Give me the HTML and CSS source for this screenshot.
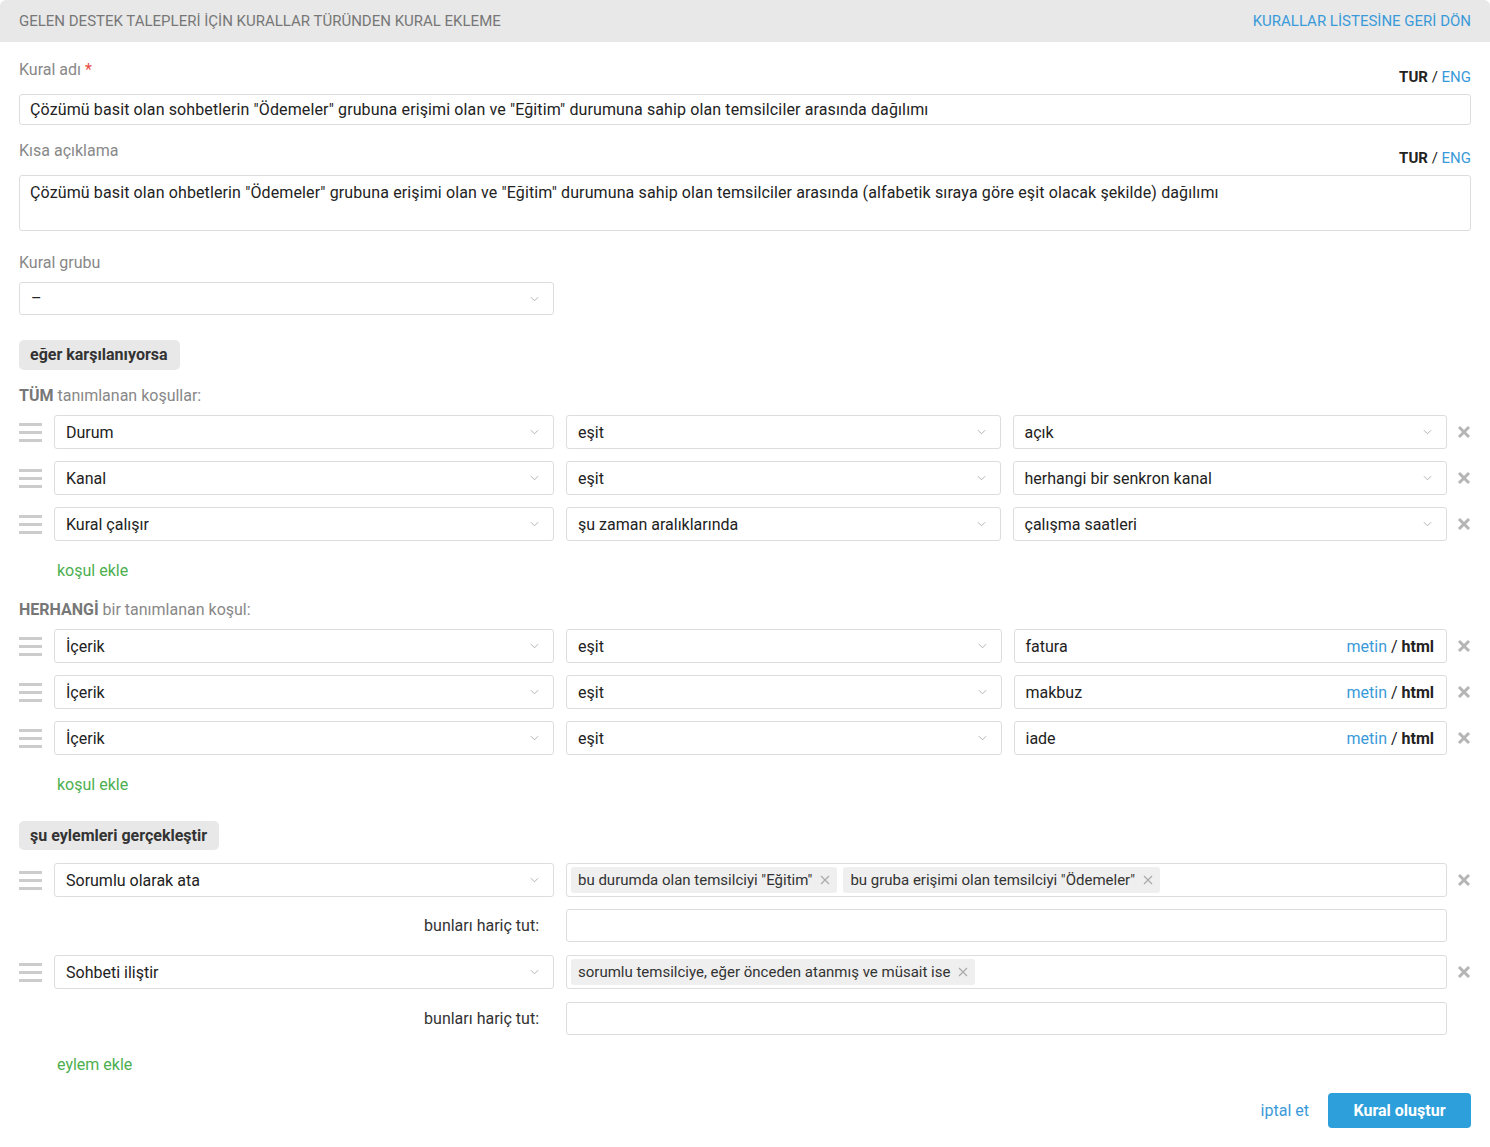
FILE: index.html
```html
<!DOCTYPE html>
<html lang="tr">
<head>
    <meta charset="UTF-8">
    <title>Kural ekleme</title>
    <link rel="stylesheet" href="styles.css">
</head>
<body>
<div class="panel">
    <div class="panel-head">
        <span class="panel-title">Gelen destek talepleri için kurallar türünden kural ekleme</span>
        <a class="panel-back" href="#">Kurallar listesine geri dön</a>
    </div>

    <div class="panel-body">
        <div class="field-head">
            <label class="field-label">Kural adı <span class="req">*</span></label>
            <span class="lang"><b>TUR</b> / <a href="#">ENG</a></span>
        </div>
        <div class="input">Çözümü basit olan sohbetlerin "Ödemeler" grubuna erişimi olan ve "Eğitim" durumuna sahip olan temsilciler arasında dağılımı</div>

        <div class="field-head second">
            <label class="field-label">Kısa açıklama</label>
            <span class="lang"><b>TUR</b> / <a href="#">ENG</a></span>
        </div>
        <div class="input textarea">Çözümü basit olan ohbetlerin "Ödemeler" grubuna erişimi olan ve "Eğitim" durumuna sahip olan temsilciler arasında (alfabetik sıraya göre eşit olacak şekilde) dağılımı</div>

        <label class="field-label group-label">Kural grubu</label>
        <div class="select group-select"><span>–</span><svg class="chev" viewBox="0 0 10 6"><path d="M1 1l4 4 4-4"/></svg></div>

        <div class="badge">eğer karşılanıyorsa</div>

        <div class="cond-title"><b>TÜM</b> tanımlanan koşullar:</div>
        <div class="rows">
            <div class="row">
                <span class="handle"><i></i><i></i><i></i></span>
                <div class="select first"><span>Durum</span><svg class="chev" viewBox="0 0 10 6"><path d="M1 1l4 4 4-4"/></svg></div>
                <div class="select"><span>eşit</span><svg class="chev" viewBox="0 0 10 6"><path d="M1 1l4 4 4-4"/></svg></div>
                <div class="select"><span>açık</span><svg class="chev" viewBox="0 0 10 6"><path d="M1 1l4 4 4-4"/></svg></div>
                <span class="remove"><svg viewBox="0 0 14 14"><path d="M2 2l10 10M12 2L2 12"/></svg></span>
            </div>
            <div class="row">
                <span class="handle"><i></i><i></i><i></i></span>
                <div class="select first"><span>Kanal</span><svg class="chev" viewBox="0 0 10 6"><path d="M1 1l4 4 4-4"/></svg></div>
                <div class="select"><span>eşit</span><svg class="chev" viewBox="0 0 10 6"><path d="M1 1l4 4 4-4"/></svg></div>
                <div class="select"><span>herhangi bir senkron kanal</span><svg class="chev" viewBox="0 0 10 6"><path d="M1 1l4 4 4-4"/></svg></div>
                <span class="remove"><svg viewBox="0 0 14 14"><path d="M2 2l10 10M12 2L2 12"/></svg></span>
            </div>
            <div class="row">
                <span class="handle"><i></i><i></i><i></i></span>
                <div class="select first"><span>Kural çalışır</span><svg class="chev" viewBox="0 0 10 6"><path d="M1 1l4 4 4-4"/></svg></div>
                <div class="select"><span>şu zaman aralıklarında</span><svg class="chev" viewBox="0 0 10 6"><path d="M1 1l4 4 4-4"/></svg></div>
                <div class="select"><span>çalışma saatleri</span><svg class="chev" viewBox="0 0 10 6"><path d="M1 1l4 4 4-4"/></svg></div>
                <span class="remove"><svg viewBox="0 0 14 14"><path d="M2 2l10 10M12 2L2 12"/></svg></span>
            </div>
        </div>
        <a class="add-link" href="#">koşul ekle</a>

        <div class="cond-title any"><b>HERHANGİ</b> bir tanımlanan koşul:</div>
        <div class="rows">
            <div class="row">
                <span class="handle"><i></i><i></i><i></i></span>
                <div class="select first"><span>İçerik</span><svg class="chev" viewBox="0 0 10 6"><path d="M1 1l4 4 4-4"/></svg></div>
                <div class="select"><span>eşit</span><svg class="chev" viewBox="0 0 10 6"><path d="M1 1l4 4 4-4"/></svg></div>
                <div class="select text"><span>fatura</span><span class="fmt"><a href="#">metin</a> / <b>html</b></span></div>
                <span class="remove"><svg viewBox="0 0 14 14"><path d="M2 2l10 10M12 2L2 12"/></svg></span>
            </div>
            <div class="row">
                <span class="handle"><i></i><i></i><i></i></span>
                <div class="select first"><span>İçerik</span><svg class="chev" viewBox="0 0 10 6"><path d="M1 1l4 4 4-4"/></svg></div>
                <div class="select"><span>eşit</span><svg class="chev" viewBox="0 0 10 6"><path d="M1 1l4 4 4-4"/></svg></div>
                <div class="select text"><span>makbuz</span><span class="fmt"><a href="#">metin</a> / <b>html</b></span></div>
                <span class="remove"><svg viewBox="0 0 14 14"><path d="M2 2l10 10M12 2L2 12"/></svg></span>
            </div>
            <div class="row">
                <span class="handle"><i></i><i></i><i></i></span>
                <div class="select first"><span>İçerik</span><svg class="chev" viewBox="0 0 10 6"><path d="M1 1l4 4 4-4"/></svg></div>
                <div class="select"><span>eşit</span><svg class="chev" viewBox="0 0 10 6"><path d="M1 1l4 4 4-4"/></svg></div>
                <div class="select text"><span>iade</span><span class="fmt"><a href="#">metin</a> / <b>html</b></span></div>
                <span class="remove"><svg viewBox="0 0 14 14"><path d="M2 2l10 10M12 2L2 12"/></svg></span>
            </div>
        </div>
        <a class="add-link" href="#">koşul ekle</a>

        <div class="badge actions-badge">şu eylemleri gerçekleştir</div>

        <div class="rows actions">
            <div class="row">
                <span class="handle"><i></i><i></i><i></i></span>
                <div class="select first"><span>Sorumlu olarak ata</span><svg class="chev" viewBox="0 0 10 6"><path d="M1 1l4 4 4-4"/></svg></div>
                <div class="tags">
                    <span class="tag">bu durumda olan temsilciyi "Eğitim" <svg viewBox="0 0 10 10"><path d="M1 1l8 8M9 1L1 9"/></svg></span>
                    <span class="tag">bu gruba erişimi olan temsilciyi "Ödemeler" <svg viewBox="0 0 10 10"><path d="M1 1l8 8M9 1L1 9"/></svg></span>
                </div>
                <span class="remove"><svg viewBox="0 0 14 14"><path d="M2 2l10 10M12 2L2 12"/></svg></span>
            </div>
            <div class="row exclude">
                <span class="exclude-label">bunları hariç tut:</span>
                <div class="tags"></div>
                <span class="remove empty"></span>
            </div>
            <div class="row">
                <span class="handle"><i></i><i></i><i></i></span>
                <div class="select first"><span>Sohbeti iliştir</span><svg class="chev" viewBox="0 0 10 6"><path d="M1 1l4 4 4-4"/></svg></div>
                <div class="tags">
                    <span class="tag">sorumlu temsilciye, eğer önceden atanmış ve müsait ise <svg viewBox="0 0 10 10"><path d="M1 1l8 8M9 1L1 9"/></svg></span>
                </div>
                <span class="remove"><svg viewBox="0 0 14 14"><path d="M2 2l10 10M12 2L2 12"/></svg></span>
            </div>
            <div class="row exclude">
                <span class="exclude-label">bunları hariç tut:</span>
                <div class="tags"></div>
                <span class="remove empty"></span>
            </div>
        </div>
        <a class="add-link action-link" href="#">eylem ekle</a>

        <div class="footer">
            <a class="cancel" href="#">iptal et</a>
            <button class="btn-primary">Kural oluştur</button>
        </div>
    </div>
</div>
</body>
</html>
```

FILE: styles.css
```css
* {
    box-sizing: border-box;
}
body {
    margin: 0;
    font-family: Roboto, "Noto Sans", Arial, sans-serif;
    color: #222;
    background-color: #fff;
}
a {
    text-decoration: none;
}
.panel {
    width: 1490px;
}
.panel-head {
    height: 42px;
    background-color: #e8e8e8;
    border-radius: 6px 6px 0 0;
    display: flex;
    align-items: center;
    justify-content: space-between;
    padding: 0 19px;
    font-size: 15px;
    text-transform: uppercase;
}
.panel-title {
    color: #777;
}
.panel-back {
    color: #3a9ad9;
}
.panel-body {
    padding: 18px 19px 19px;
}
.field-head {
    display: flex;
    justify-content: space-between;
    height: 26px;
    margin-bottom: 8px;
}
.field-head.second {
    margin-top: 16px;
}
.field-label {
    display: block;
    font-size: 16px;
    line-height: 19px;
    color: #888;
    align-self: flex-start;
}
.req {
    color: #e74c3c;
}
.lang {
    align-self: flex-end;
    font-size: 15px;
    line-height: 18px;
    color: #222;
}
.lang a {
    color: #3a9ad9;
}
.input {
    height: 31px;
    border: 1px solid #ddd;
    border-radius: 3px;
    padding: 5px 10px;
    font-size: 16px;
    line-height: 19px;
    letter-spacing: 0.12px;
}
.textarea {
    height: 56px;
    padding-top: 7px;
}
.group-label {
    margin-top: 22px;
    margin-bottom: 10px;
}
.select {
    height: 34px;
    border: 1px solid #ddd;
    border-radius: 3px;
    padding: 0 14px 0 11px;
    display: flex;
    align-items: center;
    justify-content: space-between;
    font-size: 16px;
    flex: 1;
    min-width: 0;
}
.group-select {
    width: 535px;
    height: 33px;
}
.chev {
    width: 9px;
    height: 6px;
    fill: none;
    stroke: #aaa;
    stroke-width: 1;
}
.badge {
    display: inline-block;
    margin-top: 25px;
    height: 30px;
    line-height: 30px;
    padding: 0 12px 0 11px;
    background-color: #e8e8e8;
    border-radius: 5px;
    font-size: 16px;
    font-weight: bold;
    color: #333;
}
.actions-badge {
    margin-top: 27px;
    height: 29px;
    line-height: 29px;
}
.cond-title {
    margin-top: 16px;
    font-size: 16px;
    line-height: 19px;
    color: #888;
}
.cond-title.any {
    margin-top: 20px;
}
.cond-title b {
    color: #777;
}
.rows {
    margin-top: 10px;
    display: flex;
    flex-direction: column;
    gap: 12px;
}
.rows.actions {
    margin-top: 13px;
    gap: 12px;
}
.rows.actions .exclude + .row {
    margin-top: 1px;
}
.rows.actions .exclude:last-child {
    margin-top: 1px;
}
.row {
    display: flex;
    align-items: center;
    gap: 12px;
}
.handle {
    width: 23px;
    display: flex;
    flex-direction: column;
    gap: 5px;
}
.handle i {
    display: block;
    height: 3px;
    background-color: #ccc;
}
.select.first {
    flex: none;
    width: 500px;
}
.text .fmt {
    font-size: 16px;
    color: #222;
}
.text {
    padding-right: 12px;
}
.fmt a {
    color: #3a9ad9;
}
.remove {
    width: 24px;
    margin-left: -12px;
    display: flex;
    justify-content: flex-end;
}
.remove svg {
    width: 14px;
    height: 14px;
    fill: none;
    stroke: #b5b5b5;
    stroke-width: 3;
}
.tags {
    flex: 1;
    height: 34px;
    border: 1px solid #ddd;
    border-radius: 3px;
    display: flex;
    align-items: center;
    gap: 6px;
    padding: 0 4px;
}
.tag {
    height: 26px;
    display: flex;
    align-items: center;
    gap: 8px;
    padding: 0 7px;
    background-color: #efefef;
    border-radius: 3px;
    font-size: 15px;
    color: #333;
}
.tag svg {
    width: 10px;
    height: 10px;
    fill: none;
    stroke: #aaa;
    stroke-width: 1.2;
}
.exclude .tags {
    height: 33px;
}
.exclude-label {
    width: 535px;
    padding-right: 15px;
    text-align: right;
    font-size: 16px;
    color: #333;
}
.add-link {
    display: block;
    margin: 20px 0 0 38px;
    font-size: 16px;
    line-height: 19px;
    color: #4caf50;
}
.action-link {
    margin-top: 20px;
}
.footer {
    margin-top: 19px;
    display: flex;
    justify-content: flex-end;
    align-items: center;
    gap: 19px;
}
.cancel {
    font-size: 16px;
    color: #3a9ad9;
}
.btn-primary {
    height: 35px;
    width: 143px;
    border: none;
    border-radius: 4px;
    background-color: #2d9fdb;
    color: #fff;
    font-family: Roboto, Arial, sans-serif;
    font-size: 16px;
    font-weight: bold;
}
```
